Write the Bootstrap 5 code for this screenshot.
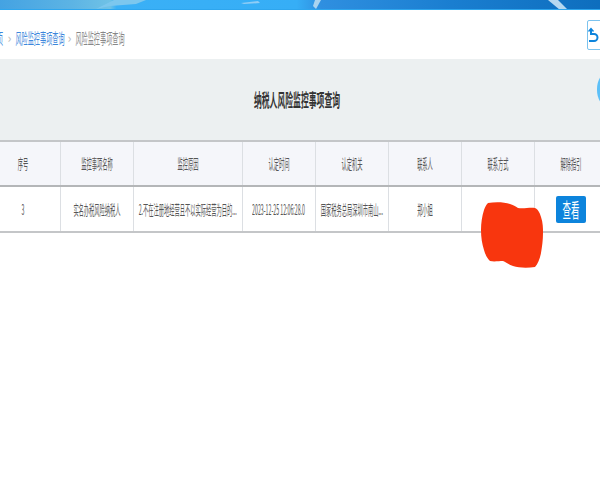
<!DOCTYPE html>
<html lang="zh"><head><meta charset="utf-8">
<link href="https://cdn.jsdelivr.net/npm/bootstrap@5.3.0/dist/css/bootstrap.min.css" rel="stylesheet">
<style>
html,body{height:100%;overflow:hidden;background:#fff}
body{font-family:"Noto Sans CJK SC","Liberation Sans",sans-serif;color:#555}
.frame{width:621px;margin-left:-14px;height:480px}
.banner{height:10px;background:linear-gradient(90deg,#3f9fe2 0,#5db4e4 14%,#6fc2e6 20%,#3ab0f6 21%,#36aef6 50%,#2f8fe0 54%,#1a7ed0 75%,#0d6dbd 100%);border-bottom:1px solid #2ea6ee;overflow:hidden}
.banner svg{display:block}
.crumbbar{height:49px}
.crumbs{margin-left:3px;margin-top:7px}
.sq{display:flex;justify-content:center;white-space:nowrap;flex:none}
.sq>span{display:inline-block;flex:none;transform:scaleX(.41)}
.crumbtxt{font-size:15px;width:49px}
.firstcrumb{width:15px}
.crumb-link{color:#3d87dc}
.crumb-cur{color:#888}
.sep{color:#bbb;font-size:13px;width:11px;text-align:center;flex:none}
.backbtn{width:20px;height:30px;border:1px solid #7cc3ee;border-radius:2px;background:#fff;margin-top:10px}
.titlepanel{height:81px;background:#ecf0f1;border-left:1px solid #e2e6e8}
.titletxt{font-size:18px;font-weight:700;color:#333}
.titletxt>span{transform:scaleX(.435)}
.tbl{table-layout:fixed;width:621px;border-collapse:collapse;margin:0}
.tbl th,.tbl td{padding:0;text-align:center;vertical-align:middle;border-left:1px solid #dcdfe3;font-weight:400}
.tbl th:first-child,.tbl td:first-child{border-left:0}
.tbl th{height:45px;background:#f5f6fa;border-top:2px solid #c4c6c8;border-bottom:2px solid #b4b6b8}
.tbl td{height:46px;background:#fff;border-bottom:2px solid #c4c6c8}
.celltxt{font-size:14px;color:#555}
.celltxt>span{transform:scaleX(.375)}
.viewbtn{width:30px;height:27px;padding:0;border:0;border-radius:2px;background:#0d84dc;color:#fff;display:inline-flex;align-items:center;justify-content:center}
.viewtxt{font-size:20px;color:#fff}
.viewtxt>span{transform:scaleX(.42)}
.scribble{position:absolute;left:481px;top:202px;width:63px;height:67px}
.edgeblob{position:absolute;left:597px;top:73px;width:20px;height:33px;border-radius:50%;background:#5cc0f8}
</style></head><body>
<div class="frame">
<div class="banner"><svg width="621" height="10" viewBox="0 0 621 10"><path fill="#7cc7ee" d="M110 9 L128 0 L160 0 L150 4 L124 6Z"/><path fill="#a9d4f0" d="M330 9 L335 0 L329 0 L327 6Z"/><path fill="#b5d8f0" d="M562 0 L572 0 L582 10 L574 10Z"/><path fill="#8fcdf6" d="M255 3 L272 1 L274 3 L258 4Z"/></svg></div>
<div class="crumbbar d-flex justify-content-between">
<div class="crumbs d-flex align-items-center">
<div class="sq crumbtxt firstcrumb crumb-link"><span>首页</span></div>
<span class="sep crumb-cur">›</span>
<div class="sq crumbtxt crumb-link"><span>风险监控事项查询</span></div>
<span class="sep crumb-cur">›</span>
<div class="sq crumbtxt crumb-cur"><span>风险监控事项查询</span></div>
</div>
<div class="backbtn d-flex align-items-center ps-0">
<svg width="12" height="16" viewBox="0 0 12 16" fill="none" stroke="#0d84dc" stroke-width="2"><path d="M3 2 L3 7 L6 7 A3.5 3.5 0 0 1 6 14 L1 14"/><path d="M0.5 4.5 L3 1.5 L5.5 4.5" stroke-width="1.4"/></svg>
</div>
</div>
<div class="titlepanel d-flex align-items-center justify-content-center"><div class="sq titletxt"><span>纳税人风险监控事项查询</span></div></div>
<table class="tbl">
<colgroup><col style="width:74px"><col style="width:73px"><col style="width:109px"><col style="width:73px"><col style="width:73px"><col style="width:73px"><col style="width:73px"><col style="width:73px"></colgroup>
<thead><tr>
<th><div class="sq celltxt"><span>序号</span></div></th><th><div class="sq celltxt"><span>监控事项名称</span></div></th><th><div class="sq celltxt"><span>监控原因</span></div></th><th><div class="sq celltxt"><span>认定时间</span></div></th><th><div class="sq celltxt"><span>认定机关</span></div></th><th><div class="sq celltxt"><span>联系人</span></div></th><th><div class="sq celltxt"><span>联系方式</span></div></th><th><div class="sq celltxt"><span>解除指引</span></div></th>
</tr></thead>
<tbody><tr>
<td><div class="sq celltxt"><span>3</span></div></td><td><div class="sq celltxt"><span>实名办税风险纳税人</span></div></td><td><div class="sq celltxt"><span>2.不在注册地经营且不以实际经营为目的...</span></div></td><td><div class="sq celltxt"><span>2023-12-25 12:06:28.0</span></div></td><td><div class="sq celltxt"><span>国家税务总局深圳市南山...</span></div></td><td><div class="sq celltxt"><span>郑小姐</span></div></td><td></td><td><button type="button" class="btn viewbtn"><div class="sq viewtxt"><span>查看</span></div></button></td>
</tr></tbody>
</table>
</div>
<div class="edgeblob"></div>
<svg class="scribble" viewBox="0 0 63 67"><path fill="#f8360e" d="M7 1 C14 0 23 0 29 2 C33 3 35 5 37 6 C43 7 49 5 54 6 C58 8 59 12 60 15 C62 21 62 26 62 31 C62 38 61 45 60 51 C59 56 57 62 54 65 C47 66 38 66 32 64 C28 63 25 60 22 59 C18 59 13 60 9 59 C6 56 4 52 3 48 C1 42 0 35 0 28 C0 21 1 14 3 8 C4 5 5 3 7 1Z"/></svg>
</body></html>
